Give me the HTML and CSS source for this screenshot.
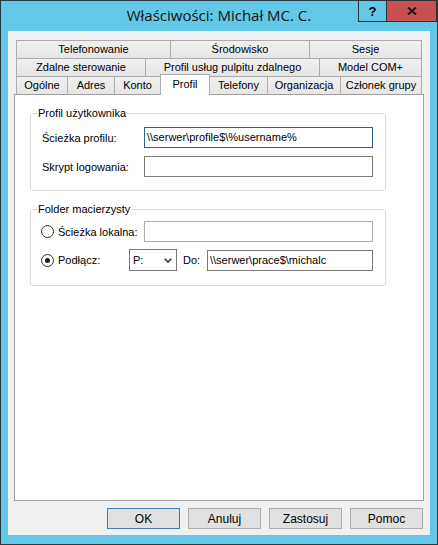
FILE: index.html
```html
<!DOCTYPE html>
<html lang="pl">
<head>
<meta charset="utf-8">
<title>Właściwości: Michał MC. C.</title>
<link rel="stylesheet" href="styles.css">
</head>
<body>
<div class="window">
  <div class="titlebar">
    <div class="tb-spacer"></div>
    <div class="title">Właściwości: Michał MC. C.</div>
    <div class="tb-buttons">
      <div class="tb-btn help">?</div>
      <div class="tb-btn close">
        <svg width="10" height="8" viewBox="0 0 10 8"><path d="M1 0.5 L9 7.5 M9 0.5 L1 7.5" stroke="#1a1a1a" stroke-width="2" fill="none"/></svg>
      </div>
    </div>
  </div>
  <div class="client">
    <div class="tabs">
      <div class="tabrow">
        <div class="tab t-telefonowanie">Telefonowanie</div>
        <div class="tab t-srodowisko">Środowisko</div>
        <div class="tab t-sesje last">Sesje</div>
      </div>
      <div class="tabrow">
        <div class="tab t-zdalne">Zdalne sterowanie</div>
        <div class="tab t-uslugi">Profil usług pulpitu zdalnego</div>
        <div class="tab t-com last">Model COM+</div>
      </div>
      <div class="tabrow">
        <div class="tab t-ogolne">Ogólne</div>
        <div class="tab t-adres">Adres</div>
        <div class="tab t-konto">Konto</div>
        <div class="tab t-profil selected">Profil</div>
        <div class="tab t-telefony">Telefony</div>
        <div class="tab t-org">Organizacja</div>
        <div class="tab t-grupa last">Członek grupy</div>
      </div>
    </div>
    <div class="panel">
      <div class="group g-profile">
        <div class="legend">Profil użytkownika</div>
        <div class="row r1">
          <div class="lbl">Ścieżka profilu:</div>
          <div class="input focused">\\serwer\profile$\%username%</div>
        </div>
        <div class="row r2">
          <div class="lbl">Skrypt logowania:</div>
          <div class="input"></div>
        </div>
      </div>
      <div class="group g-home">
        <div class="legend">Folder macierzysty</div>
        <div class="row r3">
          <div class="radio-lbl w-local"><span class="radio"></span><span>Ścieżka lokalna:</span></div>
          <div class="input disabled"></div>
        </div>
        <div class="row r4">
          <div class="radio-lbl w-connect"><span class="radio checked"></span><span>Podłącz:</span></div>
          <div class="select">
            <span>P:</span>
            <svg width="8" height="5" viewBox="0 0 8 5"><path d="M0.7 0.7 L4 4 L7.3 0.7" stroke="#333" stroke-width="1.6" fill="none"/></svg>
          </div>
          <div class="do-lbl">Do:</div>
          <div class="input short">\\serwer\prace$\michalc</div>
        </div>
      </div>
    </div>
    <div class="buttons">
      <div class="btn default">OK</div>
      <div class="btn">Anuluj</div>
      <div class="btn">Zastosuj</div>
      <div class="btn">Pomoc</div>
    </div>
  </div>
</div>
</body>
</html>
```

FILE: styles.css
```css
* { box-sizing: border-box; }
html, body { margin: 0; padding: 0; }
body {
  font-family: "Liberation Sans", Arial, sans-serif;
  font-size: 11px;
  color: #000;
}
.window {
  width: 438px;
  height: 545px;
  background: #62c8e8;
  border: 1px solid #2a3a42;
  display: flex;
  flex-direction: column;
}
.titlebar {
  height: 30px;
  display: grid;
  grid-template-columns: 1fr auto 1fr;
  align-items: start;
}
.title {
  font-family: "Open Sans", "Noto Sans", sans-serif;
  font-size: 15px;
  line-height: 20px;
  margin-top: 4px;
  color: #111;
  white-space: nowrap;
}
.tb-buttons {
  justify-self: end;
  display: flex;
  margin-top: -1px;
}
.tb-btn {
  height: 22px;
  border: 1px solid #2a3238;
  display: flex;
  align-items: center;
  justify-content: center;
}
.help {
  width: 29px;
  font-weight: bold;
  font-size: 13px;
  font-family: "Liberation Sans", Arial, sans-serif;
}
.close {
  width: 50px;
  border-left: none;
  background: #c75050;
}
.client {
  margin: 0 7px 8px 7px;
  height: 504px;
  background: #f0f0f0;
  display: flex;
  flex-direction: column;
}
.tabs {
  margin: 9px 0 0 8px;
  display: flex;
  flex-direction: column;
}
.tabrow {
  display: flex;
  height: 18px;
}
.tab {
  height: 18px;
  border-top: 1px solid #acacac;
  border-left: 1px solid #acacac;
  background: linear-gradient(#f0f0f0, #e6e6e6);
  text-align: center;
  line-height: 17px;
  white-space: nowrap;
}
.tab.last { border-right: 1px solid #acacac; }
.tab.selected {
  position: relative;
  z-index: 1;
  background: #fff;
  height: 21px;
  margin-top: -2px;
  margin-bottom: -1px;
  margin-right: -1px;
  border-right: 1px solid #acacac;
  line-height: 18px;
}
.t-telefonowanie { width: 154px; }
.t-srodowisko { width: 139px; }
.t-sesje { width: 113px; }
.t-zdalne { width: 129px; }
.t-uslugi { width: 174px; }
.t-com { width: 103px; }
.t-ogolne { width: 51px; }
.t-adres { width: 47px; }
.t-konto { width: 46px; }
.t-profil { width: 50px; }
.t-telefony { width: 58px; }
.t-org { width: 73px; }
.t-grupa { width: 82px; }

.panel {
  margin-left: 6px;
  width: 410px;
  height: 407px;
  background: #fff;
  border: 1px solid #a0a0a0;
  display: flex;
  flex-direction: column;
}
.group {
  margin-left: 15px;
  width: 356px;
  border: 1px solid #d5dbe1;
  border-radius: 3px;
  display: flex;
  flex-direction: column;
}
.g-profile { margin-top: 18px; padding-bottom: 13px; }
.g-home { margin-top: 18px; padding-bottom: 14px; }
.legend {
  align-self: flex-start;
  margin: -7px 0 0 6px;
  padding: 0 1px;
  line-height: 13px;
  background: #fff;
}
.row {
  display: flex;
  align-items: center;
  height: 21px;
}
.r1 { margin-top: 7px; }
.r2 { margin-top: 8px; }
.r3 { margin-top: 5px; }
.r4 { margin-top: 7px; height: 22px; }
.lbl {
  width: 113px;
  padding-left: 11px;
}
.input {
  width: 229px;
  height: 21px;
  border: 1px solid #7a7a7a;
  background: #fff;
  padding-left: 2px;
  line-height: 19px;
  white-space: nowrap;
  overflow: hidden;
}
.input.focused { border-color: #2f5f8a; }
.input.disabled { border-color: #adadad; }
.input.short { width: 166px; }
.radio-lbl {
  display: flex;
  align-items: center;
  padding-left: 10px;
  gap: 4px;
}
.w-local { width: 113px; }
.w-connect { width: 98px; }
.radio {
  width: 13px;
  height: 13px;
  border: 1px solid #333;
  border-radius: 50%;
  background: #fff;
  display: flex;
  align-items: center;
  justify-content: center;
}
.radio.checked::after {
  content: "";
  width: 5px;
  height: 5px;
  border-radius: 50%;
  background: #1a1a1a;
}
.select {
  width: 48px;
  height: 22px;
  border: 1px solid #7a7a7a;
  background: #fff;
  display: flex;
  align-items: center;
  justify-content: space-between;
  padding: 0 4px 0 3px;
}
.do-lbl {
  width: 30px;
  padding-left: 6px;
}
.buttons {
  margin-top: 7px;
  display: flex;
  justify-content: flex-end;
  gap: 8px;
  padding-right: 7px;
}
.btn {
  width: 73px;
  height: 21px;
  border: 1px solid #adadad;
  background: #e1e1e1;
  display: flex;
  align-items: center;
  justify-content: center;
  font-size: 12px;
}
.btn.default { border-color: #3c7fb1; }
```
